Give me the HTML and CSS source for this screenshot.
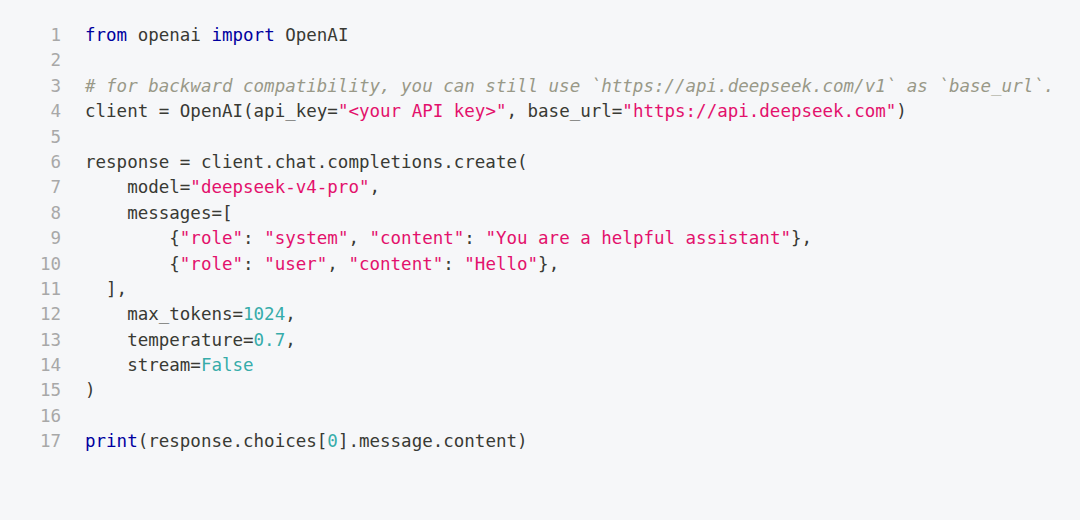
FILE: index.html
```html
<!DOCTYPE html>
<html lang="en">
<head>
<meta charset="utf-8">
<link rel="stylesheet" href="styles.css">
</head>
<body>
<pre class="code"><div class="line"><span class="ln">1</span><span class="src"><span class="kw">from</span> openai <span class="kw">import</span> OpenAI</span></div><div class="line"><span class="ln">2</span><span class="src"></span></div><div class="line"><span class="ln">3</span><span class="src"><span class="cm"># for backward compatibility, you can still use `https://api.deepseek.com/v1` as `base_url`.</span></span></div><div class="line"><span class="ln">4</span><span class="src">client = OpenAI(api_key=<span class="str">"&lt;your API key&gt;"</span>, base_url=<span class="str">"https://api.deepseek.com"</span>)</span></div><div class="line"><span class="ln">5</span><span class="src"></span></div><div class="line"><span class="ln">6</span><span class="src">response = client.chat.completions.create(</span></div><div class="line"><span class="ln">7</span><span class="src">    model=<span class="str">"deepseek-v4-pro"</span>,</span></div><div class="line"><span class="ln">8</span><span class="src">    messages=[</span></div><div class="line"><span class="ln">9</span><span class="src">        {<span class="str">"role"</span>: <span class="str">"system"</span>, <span class="str">"content"</span>: <span class="str">"You are a helpful assistant"</span>},</span></div><div class="line"><span class="ln">10</span><span class="src">        {<span class="str">"role"</span>: <span class="str">"user"</span>, <span class="str">"content"</span>: <span class="str">"Hello"</span>},</span></div><div class="line"><span class="ln">11</span><span class="src">  ],</span></div><div class="line"><span class="ln">12</span><span class="src">    max_tokens=<span class="num">1024</span>,</span></div><div class="line"><span class="ln">13</span><span class="src">    temperature=<span class="num">0.7</span>,</span></div><div class="line"><span class="ln">14</span><span class="src">    stream=<span class="num">False</span></span></div><div class="line"><span class="ln">15</span><span class="src">)</span></div><div class="line"><span class="ln">16</span><span class="src"></span></div><div class="line"><span class="ln">17</span><span class="src"><span class="kw">print</span>(response.choices[<span class="num">0</span>].message.content)</span></div></pre>
</body>
</html>
```
FILE: styles.css
```css
html, body {
  margin: 0;
  padding: 0;
  background: #f6f7f9;
}
.code {
  margin: 0;
  padding: 23px 0 0 40px;
  font-family: "DejaVu Sans Mono", monospace;
  font-size: 17.5px;
  line-height: 25.4px;
  color: #393a34;
}
.line {
  display: flex;
  height: 25.4px;
}
.ln {
  width: 21px;
  text-align: right;
  color: #a8a8a8;
  margin-right: 24px;
  flex: none;
}
.src {
  white-space: pre;
}
.kw { color: #00009f; }
.str { color: #e3116c; }
.num { color: #36acaa; }
.cm { color: #999988; font-style: italic; }
```
